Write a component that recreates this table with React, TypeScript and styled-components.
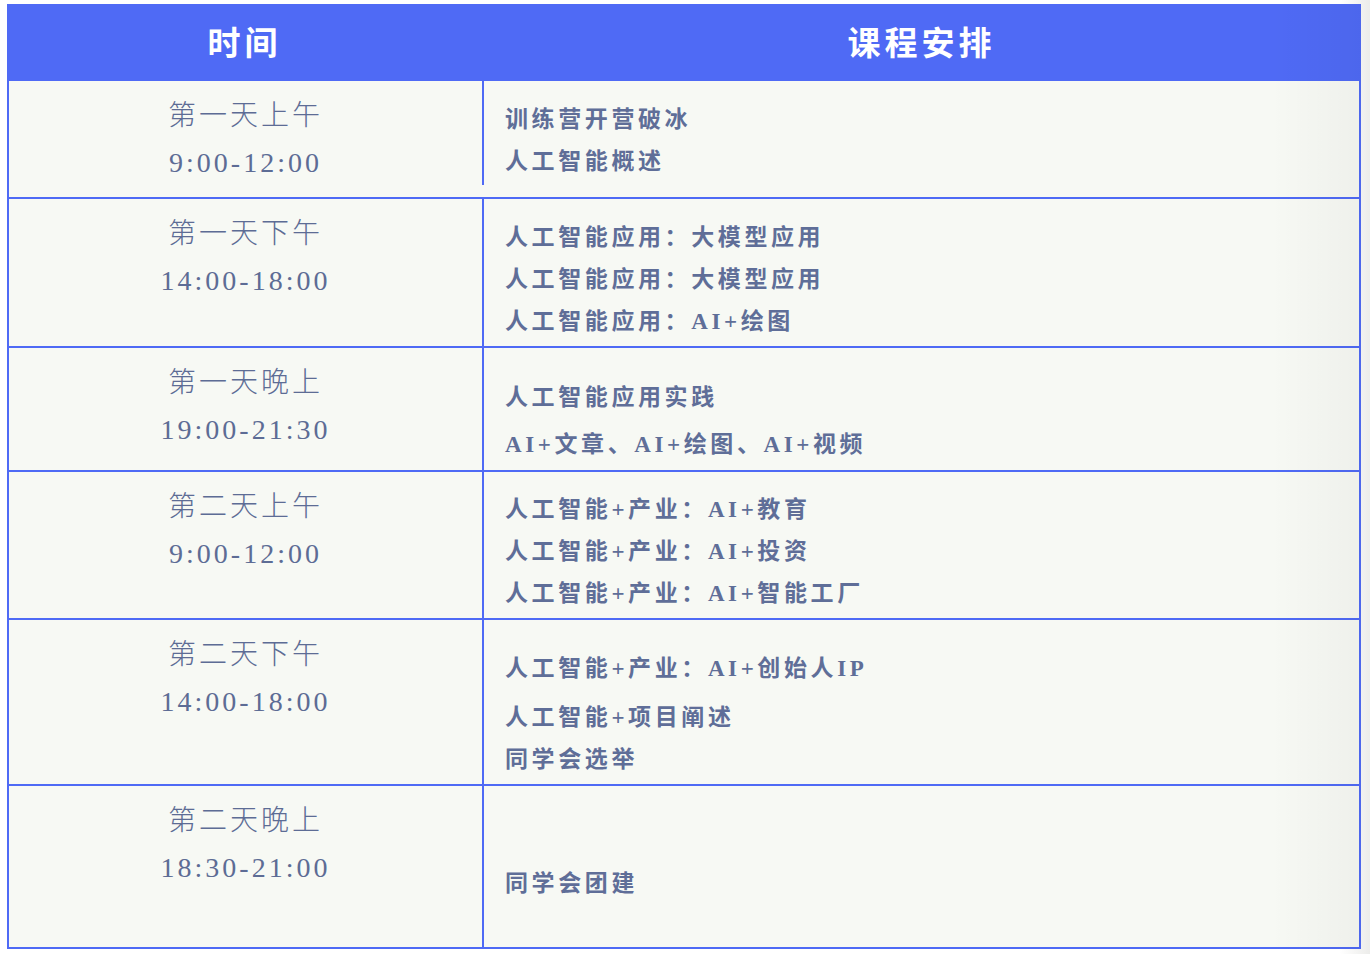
import React from "react"
import styled, {createGlobalStyle} from "styled-components"

const BLUE = "#4f6af5"

const GlobalStyle = createGlobalStyle`
  body {
    margin: 0;
    background: linear-gradient(to right, #ffffff 1340px, #ececea 1370px);
    font-family: "Liberation Serif", "Noto Sans CJK SC", serif;
  }
`

const Page = styled.div`
  padding: 4px 0 5px 7px;
`

const Table = styled.div`
  position: relative;
  width: 1354px;
  &::after {
    content: "";
    position: absolute;
    top: 0;
    right: 0;
    bottom: 0;
    width: 90px;
    pointer-events: none;
    background: linear-gradient(to right, rgba(0, 0, 0, 0), rgba(0, 0, 0, 0.035));
  }
`

const HeaderRow = styled.div`
  display: grid;
  grid-template-columns: 475px 1fr;
  height: 77px;
  background: ${BLUE};
`

const HeaderCell = styled.div`
  display: flex;
  align-items: center;
  justify-content: center;
  padding-bottom: 4px;
  color: #ffffff;
  font-family: "Noto Sans CJK SC", "Noto Sans", sans-serif;
  font-weight: 700;
  font-size: 33px;
  letter-spacing: 4px;
`

const Row = styled.div<{$h: number}>`
  display: grid;
  grid-template-columns: 473px 1fr;
  box-sizing: border-box;
  height: ${p => p.$h}px;
  background: #f7f9f4;
  border-left: 2px solid ${BLUE};
  border-right: 2px solid ${BLUE};
  border-bottom: 2px solid ${BLUE};
`

const TimeCell = styled.div`
  padding-top: 11px;
  text-align: center;
  color: #5d6c95;
  font-size: 28px;
  font-weight: 300;
  line-height: 47px;
  letter-spacing: 3px;
`

const PlanCell = styled.div<{$top: number; $divider?: number}>`
  box-sizing: border-box;
  padding: ${p => p.$top}px 0 0 21px;
  border-left: 2px solid ${BLUE};
  ${p => p.$divider ? `align-self: start; height: ${p.$divider}px;` : ""}
`

const PlanLine = styled.div<{$gap?: number}>`
  margin-top: ${p => p.$gap || 0}px;
  color: #5f6e98;
  font-weight: 700;
  font-size: 23px;
  line-height: 42px;
  letter-spacing: 3.6px;
  white-space: nowrap;
`

interface Line {
  text: string;
  gap?: number;
}

interface Slot {
  day: string;
  time: string;
  height: number;
  top: number;
  divider?: number;
  lines: Line[];
}

const schedule: Slot[] = [
  {
    day: "第一天上午", time: "9:00-12:00", height: 118, top: 18, divider: 104,
    lines: [{text: "训练营开营破冰"}, {text: "人工智能概述"}],
  },
  {
    day: "第一天下午", time: "14:00-18:00", height: 149, top: 18,
    lines: [
      {text: "人工智能应用：大模型应用"},
      {text: "人工智能应用：大模型应用"},
      {text: "人工智能应用：AI+绘图"},
    ],
  },
  {
    day: "第一天晚上", time: "19:00-21:30", height: 124, top: 29,
    lines: [{text: "人工智能应用实践"}, {text: "AI+文章、AI+绘图、AI+视频", gap: 5}],
  },
  {
    day: "第二天上午", time: "9:00-12:00", height: 148, top: 17,
    lines: [
      {text: "人工智能+产业：AI+教育"},
      {text: "人工智能+产业：AI+投资"},
      {text: "人工智能+产业：AI+智能工厂"},
    ],
  },
  {
    day: "第二天下午", time: "14:00-18:00", height: 166, top: 28,
    lines: [
      {text: "人工智能+产业：AI+创始人IP"},
      {text: "人工智能+项目阐述", gap: 7},
      {text: "同学会选举"},
    ],
  },
  {
    day: "第二天晚上", time: "18:30-21:00", height: 163, top: 77,
    lines: [{text: "同学会团建"}],
  },
]

function App() {
  return (
    <>
      <GlobalStyle />
      <Page>
        <Table>
          <HeaderRow>
            <HeaderCell>时间</HeaderCell>
            <HeaderCell>课程安排</HeaderCell>
          </HeaderRow>
          {schedule.map(slot => (
            <Row key={slot.day + slot.time} $h={slot.height}>
              <TimeCell>
                <div>{slot.day}</div>
                <div>{slot.time}</div>
              </TimeCell>
              <PlanCell $top={slot.top} $divider={slot.divider}>
                {slot.lines.map((line, i) => (
                  <PlanLine key={i} $gap={line.gap}>{line.text}</PlanLine>
                ))}
              </PlanCell>
            </Row>
          ))}
        </Table>
      </Page>
    </>
  )
}

export default App;
